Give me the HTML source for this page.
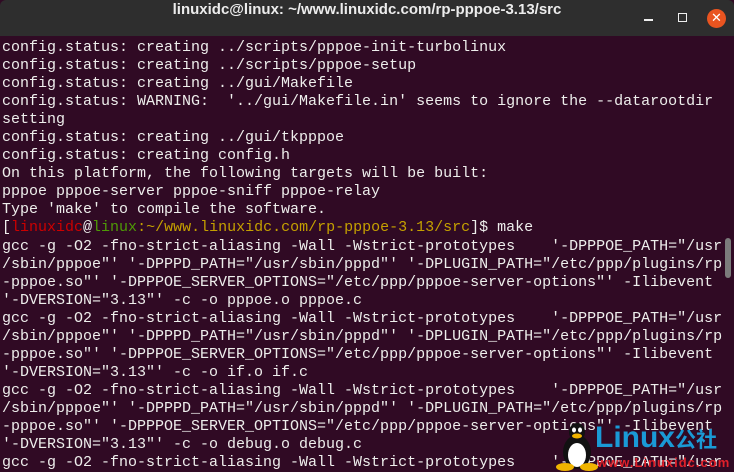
<!DOCTYPE html>
<html><head><meta charset="utf-8"><style>
html,body{margin:0;padding:0;width:734px;height:471px;overflow:hidden;background:#300a24}
#tb{position:absolute;left:0;top:0;width:734px;height:36px;background:#2e2e2e;border-radius:6px 6px 0 0}
#title{position:absolute;left:0;width:734px;top:1px;line-height:36px;text-align:center;color:#ececec;font:bold 15px "Liberation Sans",sans-serif}
#term{position:absolute;left:2px;top:39px;margin:0;font:15px/18.04px "Liberation Mono","DejaVu Sans Mono",monospace;color:#eeeeec;white-space:pre}
.r{color:#cc0000}.g{color:#4e9a06}.y{color:#c4a000}
#sb{position:absolute;left:725px;top:238px;width:6px;height:40px;background:#7b7b7b;border-radius:3px}
</style></head><body>
<div id="tb"><div id="title">linuxidc@linux: ~/www.linuxidc.com/rp-pppoe-3.13/src</div>
<div style="position:absolute;left:644px;top:19px;width:9px;height:2px;background:#eee"></div>
<div style="position:absolute;left:678px;top:13px;width:7px;height:7px;border:1.5px solid #eee"></div>
<div style="position:absolute;left:707px;top:9px;width:19px;height:19px;border-radius:50%;background:#e95420;color:#fff;font:bold 13px/19px 'DejaVu Sans',sans-serif;text-align:center">✕</div>
</div>
<pre id="term">config.status: creating ../scripts/pppoe-init-turbolinux
config.status: creating ../scripts/pppoe-setup
config.status: creating ../gui/Makefile
config.status: WARNING:  '../gui/Makefile.in' seems to ignore the --datarootdir
setting
config.status: creating ../gui/tkpppoe
config.status: creating config.h
On this platform, the following targets will be built:
pppoe pppoe-server pppoe-sniff pppoe-relay
Type 'make' to compile the software.
[<span class="r">linuxidc</span>@<span class="g">linux</span><span class="y">:~/www.linuxidc.com/rp-pppoe-3.13/src</span>]$ make
gcc -g -O2 -fno-strict-aliasing -Wall -Wstrict-prototypes    '-DPPPOE_PATH="/usr
/sbin/pppoe"' '-DPPPD_PATH="/usr/sbin/pppd"' '-DPLUGIN_PATH="/etc/ppp/plugins/rp
-pppoe.so"' '-DPPPOE_SERVER_OPTIONS="/etc/ppp/pppoe-server-options"' -Ilibevent
'-DVERSION="3.13"' -c -o pppoe.o pppoe.c
gcc -g -O2 -fno-strict-aliasing -Wall -Wstrict-prototypes    '-DPPPOE_PATH="/usr
/sbin/pppoe"' '-DPPPD_PATH="/usr/sbin/pppd"' '-DPLUGIN_PATH="/etc/ppp/plugins/rp
-pppoe.so"' '-DPPPOE_SERVER_OPTIONS="/etc/ppp/pppoe-server-options"' -Ilibevent
'-DVERSION="3.13"' -c -o if.o if.c
gcc -g -O2 -fno-strict-aliasing -Wall -Wstrict-prototypes    '-DPPPOE_PATH="/usr
/sbin/pppoe"' '-DPPPD_PATH="/usr/sbin/pppd"' '-DPLUGIN_PATH="/etc/ppp/plugins/rp
-pppoe.so"' '-DPPPOE_SERVER_OPTIONS="/etc/ppp/pppoe-server-options"' -Ilibevent
'-DVERSION="3.13"' -c -o debug.o debug.c
gcc -g -O2 -fno-strict-aliasing -Wall -Wstrict-prototypes    '-DPPPOE_PATH="/usr</pre>
<div id="sb"></div>
<svg style="position:absolute;left:555px;top:422px" width="44" height="49" viewBox="0 0 44 49">
<ellipse cx="22" cy="30" rx="14" ry="17" fill="#111"/>
<ellipse cx="22" cy="33" rx="9" ry="12" fill="#fff"/>
<ellipse cx="22" cy="10" rx="8" ry="9" fill="#111"/>
<ellipse cx="19" cy="8" rx="2" ry="2.5" fill="#fff"/><ellipse cx="25" cy="8" rx="2" ry="2.5" fill="#fff"/>
<ellipse cx="22" cy="14" rx="5" ry="2.5" fill="#f0b400"/>
<ellipse cx="10" cy="45" rx="9" ry="4" fill="#f0b400"/><ellipse cx="34" cy="45" rx="9" ry="4" fill="#f0b400"/>
</svg>
<div style="position:absolute;left:595px;top:422px;font:bold 30px/32px 'Liberation Sans',sans-serif;color:#1a9ad6">Linux<span style="font:bold 21px 'Noto Sans CJK SC',sans-serif">公社</span></div>
<div style="position:absolute;left:597px;top:455px;font:bold 13px/16px 'Liberation Sans',sans-serif;color:#e0202a;letter-spacing:1px">www.Linuxidc.com</div>
</body></html>
